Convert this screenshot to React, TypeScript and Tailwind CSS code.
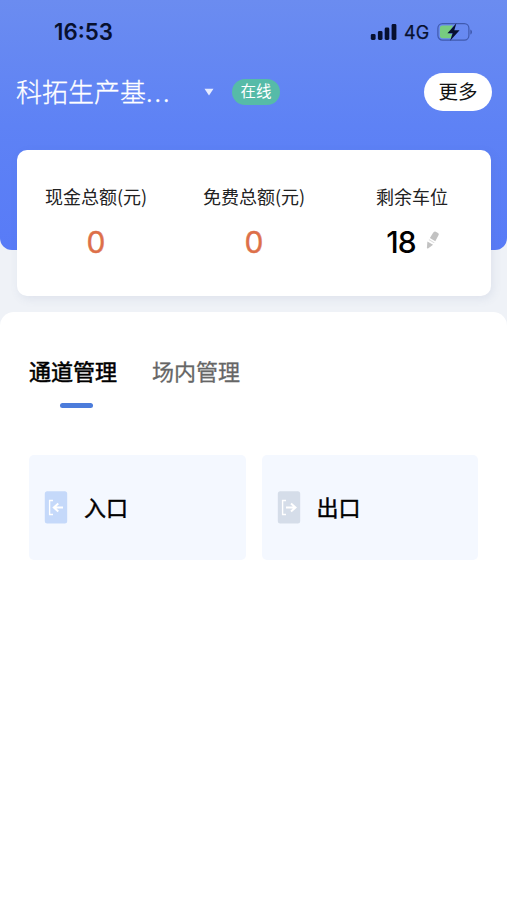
import React from "react";

const cjk = "font-['Noto_Sans_CJK_SC',sans-serif]";
const latin = "font-['Inter','Liberation_Sans',sans-serif]";

function StatusBar() {
  return (
    <div className={`flex h-16 items-center justify-between pl-[54px] pr-[34px] text-[#07102f] ${latin}`}>
      <span className="text-[22.3px] font-semibold leading-none">16:53</span>
      <div className="flex items-center">
        <svg width="27" height="18" viewBox="0 0 27 18" fill="currentColor">
          <rect x="0.8" y="11" width="4.8" height="6" rx="1.4" />
          <rect x="7.9" y="8" width="4.6" height="9" rx="1.4" />
          <rect x="14.7" y="4.6" width="4.6" height="12.4" rx="1.4" />
          <rect x="21.6" y="1" width="4.8" height="16" rx="1.4" />
        </svg>
        <span className="ml-[7px] w-[26px] pt-[2px] text-[18px] leading-none [-webkit-text-stroke:0.25px_currentColor]">4G</span>
        <svg className="ml-[7px]" width="36" height="20" viewBox="0 0 36 20">
          <rect x="0.9" y="1.7" width="31" height="16.4" rx="4.6" fill="none" stroke="#405aae" strokeWidth="1.2" />
          <path d="M5.5 3.6H16L12 12h3l-1 4.2H5.5a2.6 2.6 0 0 1-2.6-2.6V6.2a2.6 2.6 0 0 1 2.6-2.6Z" fill="#77cc80" />
          <path d="M33.3 7.4c2.3.7 2.3 4.4 0 5.1Z" fill="#405aae" />
          <path d="M19.4 1.2 10.4 11.3h5.2l-2.5 7.4 9.5-10.4h-5.3Z" fill="#07102f" />
        </svg>
      </div>
    </div>
  );
}

function Stat({ label, children }: { label: string; children: React.ReactNode }) {
  return (
    <div className="flex w-[158px] flex-col items-center">
      <span className="h-7 whitespace-nowrap text-[18px] leading-7 text-[#222]">{label}</span>
      <div className={`mt-4 flex h-8 items-center text-[30px] leading-8 ${latin}`}>{children}</div>
    </div>
  );
}

function Gate({ label, out }: { label: string; out?: boolean }) {
  return (
    <div className="flex h-[105px] w-[217px] items-center rounded-[5px] bg-[#f4f8ff] pl-[15px]">
      <svg width="24" height="33" viewBox="0 0 24 33" fill="none">
        <rect x="0.8" y="0.3" width="22.4" height="32.2" rx="2.5" fill={out ? "#d5dde9" : "#c5d9fa"} />
        <path d="M9 9.5H5.6v14H9" stroke="#fff" strokeWidth="1.4" />
        <path
          d={out ? "M9 16.5h9M14 12.5l4.5 4-4.5 4" : "M19 16.5h-9M14.3 12.5l-4.5 4 4.5 4"}
          stroke="#fff"
          strokeWidth="2"
        />
      </svg>
      <span className="ml-4 pb-[3px] text-[22px] leading-8 text-black [-webkit-text-stroke:0.45px_currentColor]">{label}</span>
    </div>
  );
}

export default function App() {
  return (
    <div className={`h-[900px] w-[507px] overflow-hidden bg-[#eff2f7] ${cjk}`}>
      <header className="h-[250px] rounded-b-[12px] bg-linear-to-b from-[#6b8cf0] via-[#5e82f5] via-50% to-[#587bf7]">
        <StatusBar />
        <div className="flex h-[55px] items-center pl-4 pr-[15px]">
          <div className="w-[188px] whitespace-nowrap pb-[2px] text-[26px] font-light leading-9 text-white [-webkit-text-stroke:0.3px_currentColor]">
            科拓生产基<span className="tracking-[2px]">...</span>
          </div>
          <svg width="10" height="8" viewBox="0 0 10 8" fill="#e5ebff">
            <path d="M.5.7h9L5 7.5Z" />
          </svg>
          <span className="ml-[18px] flex h-[26px] w-[48px] items-center justify-center rounded-full bg-[#56bba8] pb-[2px] text-[15.5px] leading-none text-white">
            在线
          </span>
          <button className="ml-auto flex h-[38px] w-[68px] items-center justify-center rounded-full bg-white pb-[2px] text-[19.5px] leading-none text-[#111]">
            更多
          </button>
        </div>
      </header>

      <section className="relative ml-[17px] mt-[-100px] flex h-[146px] w-[474px] rounded-[10px] bg-white pt-8 shadow-[2px_3px_10px_rgba(80,100,150,0.1)]">
        <Stat label="现金总额(元)">
          <span className="text-[#dd7049] [-webkit-text-stroke:0.4px_currentColor]">0</span>
        </Stat>
        <Stat label="免费总额(元)">
          <span className="text-[#dd7049] [-webkit-text-stroke:0.4px_currentColor]">0</span>
        </Stat>
        <Stat label="剩余车位">
          <span className="pl-[2px] font-medium tracking-[-0.8px] text-black">18</span>
          <svg className="mb-1 ml-[10px]" width="14" height="18" viewBox="0 0 14 18" fill="#c2c2c2">
            <path d="m6.8 2.2 1-1.2a1.6 1.6 0 0 1 2-.3l2.2 1.4c.8.5 1 1.3.6 2L9.3 10.2 3.9 7Z" />
            <path d="m1.4 10.5 5.7 3.3-5.1 3.6c-.6.4-1.1.1-1.1-.6Z" />
            <path d="m3.2 8.2 5.4 3.2-.6.9-5.4-3.2Z" fill="#dedede" />
          </svg>
        </Stat>
      </section>

      <main className="mt-4 h-[588px] rounded-t-[14px] bg-white px-[29px] pt-[42px]">
        <nav className="flex gap-[35px] text-[22px] leading-8">
          <div className="h-[54px] text-black [-webkit-text-stroke:0.55px_currentColor]">
            通道管理
            <div className="ml-[31px] mt-[17px] h-[5px] w-[33px] rounded-full bg-[#4c7cdb]" />
          </div>
          <div className="text-[#666] [-webkit-text-stroke:0.3px_currentColor]">场内管理</div>
        </nav>
        <div className="mt-[47px] flex gap-4">
          <Gate label="入口" />
          <Gate label="出口" out />
        </div>
      </main>
    </div>
  );
}
